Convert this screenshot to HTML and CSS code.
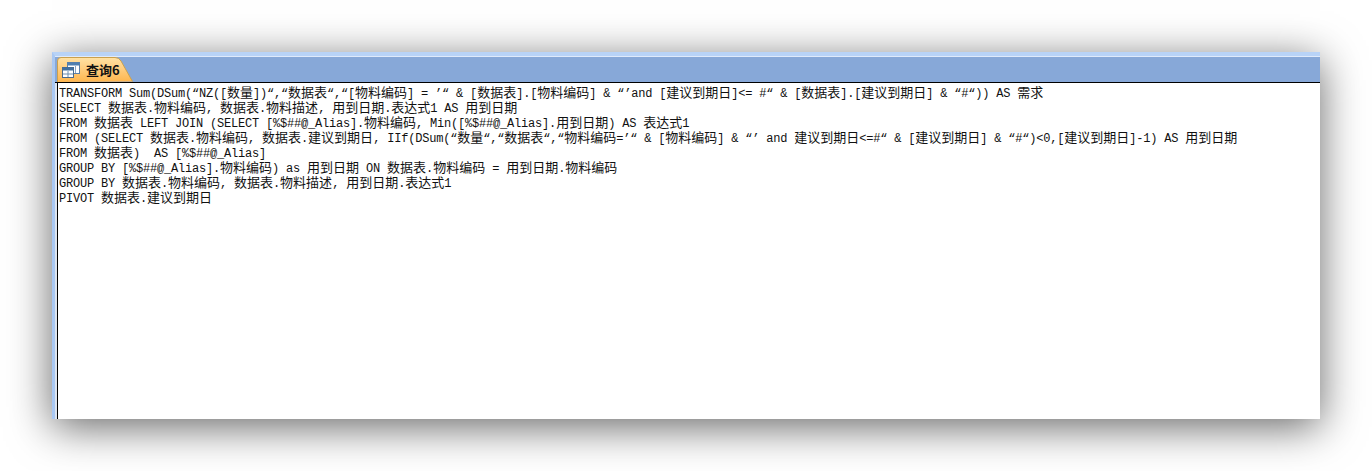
FILE: index.html
```html
<!DOCTYPE html>
<html lang="zh-CN">
<head>
<meta charset="utf-8">
<title>查询6</title>
<link rel="stylesheet" href="styles.css">
</head>
<body>
<main class="window">
  <div class="tabbar">
    <div class="tab">
      <svg class="tab-shape" width="78" height="26" viewBox="0 0 78 26">
        <defs>
          <linearGradient id="tabfill" x1="0" y1="0" x2="0" y2="1">
            <stop offset="0" stop-color="#ffe2a4"/>
            <stop offset="0.4" stop-color="#ffd084"/>
            <stop offset="1" stop-color="#ffb64e"/>
          </linearGradient>
        </defs>
        <path d="M0.5 26V5Q0.5 1.500 4 1.500H58Q62 1.500 64 5L75.500 25.500" fill="url(#tabfill)" stroke="#c9a04f"/>
      </svg>
      <svg class="tab-icon" width="18" height="16" viewBox="0 0 18 16">
        <rect x="5.500" y="0.500" width="12" height="11" fill="#fff" stroke="#5b7fa8"/>
        <rect x="5.500" y="0.500" width="12" height="3" fill="#4f7fb0"/>
        <path d="M13.500 4v7" stroke="#88a4c4"/>
        <rect x="0.500" y="5.500" width="11" height="10" fill="#fff" stroke="#4a6a8c"/>
        <rect x="0.500" y="5.500" width="11" height="3" fill="#3f6f9f"/>
        <path d="M6 9v6M1 12h10" stroke="#6f8fb0"/>
      </svg>
      <span class="tab-label">查询6</span>
    </div>
  </div>
  <pre class="sql">TRANSFORM Sum(DSum(“NZ([<span class="c">数量</span>])“,“<span class="c">数据表</span>“,“[<span class="c">物料编码</span>] = ’“ &amp; [<span class="c">数据表</span>].[<span class="c">物料编码</span>] &amp; “’and [<span class="c">建议到期日</span>]&lt;= #“ &amp; [<span class="c">数据表</span>].[<span class="c">建议到期日</span>] &amp; “#“)) AS <span class="c">需求</span>
SELECT <span class="c">数据表</span>.<span class="c">物料编码</span>, <span class="c">数据表</span>.<span class="c">物料描述</span>, <span class="c">用到日期</span>.<span class="c">表达式</span>1 AS <span class="c">用到日期</span>
FROM <span class="c">数据表</span> LEFT JOIN (SELECT [%$##@_Alias].<span class="c">物料编码</span>, Min([%$##@_Alias].<span class="c">用到日期</span>) AS <span class="c">表达式</span>1
FROM (SELECT <span class="c">数据表</span>.<span class="c">物料编码</span>, <span class="c">数据表</span>.<span class="c">建议到期日</span>, IIf(DSum(“<span class="c">数量</span>“,“<span class="c">数据表</span>“,“<span class="c">物料编码</span>=’“ &amp; [<span class="c">物料编码</span>] &amp; “’ and <span class="c">建议到期日</span>&lt;=#“ &amp; [<span class="c">建议到期日</span>] &amp; “#“)&lt;0,[<span class="c">建议到期日</span>]-1) AS <span class="c">用到日期</span>
FROM <span class="c">数据表</span>)  AS [%$##@_Alias]
GROUP BY [%$##@_Alias].<span class="c">物料编码</span>) as <span class="c">用到日期</span> ON <span class="c">数据表</span>.<span class="c">物料编码</span> = <span class="c">用到日期</span>.<span class="c">物料编码</span>
GROUP BY <span class="c">数据表</span>.<span class="c">物料编码</span>, <span class="c">数据表</span>.<span class="c">物料描述</span>, <span class="c">用到日期</span>.<span class="c">表达式</span>1
PIVOT <span class="c">数据表</span>.<span class="c">建议到期日</span></pre>
</main>
</body>
</html>
```
FILE: styles.css
```css
* { box-sizing: border-box; }
html, body { height: 100%; }
body {
  margin: 0;
  padding: 52px;
  background: #fff;
  overflow: hidden;
}
.window {
  width: 1268px;
  height: 367px;
  display: flex;
  flex-direction: column;
  background: #dde4ee;
  border-top: 4px solid #b8d3f7;
  border-left: 3px solid #a9c8f3;
  box-shadow: 0 8px 40px rgba(0, 0, 0, 0.6);
}
.tabbar {
  height: 27px;
  flex: none;
  display: flex;
  align-items: flex-end;
  padding-left: 2px;
  background: #87a8d8;
  border-top: 1px solid #dfeafb;
  border-bottom: 1px solid #000;
}
.tab {
  position: relative;
  width: 78px;
  height: 25px;
  display: flex;
  align-items: center;
  gap: 6px;
  padding-left: 5px;
}
.tab-shape { position: absolute; left: 0; top: -1px; }
.tab-icon { position: relative; flex: none; }
.tab-label {
  position: relative;
  font: bold 13px "Noto Sans CJK SC", sans-serif;
  color: #111;
}
.sql {
  flex: 1;
  margin: 0 0 0 2px;
  padding: 4px 0 0 1px;
  background: #fff;
  border-left: 1px solid #000;
  font: 12px/15px "Liberation Mono", "Noto Sans CJK SC", monospace;
  letter-spacing: -0.2px;
  color: #111;
  white-space: pre;
}
.c {
  font: 13px/1px "Noto Sans CJK SC", sans-serif;
  letter-spacing: 0;
}
```
